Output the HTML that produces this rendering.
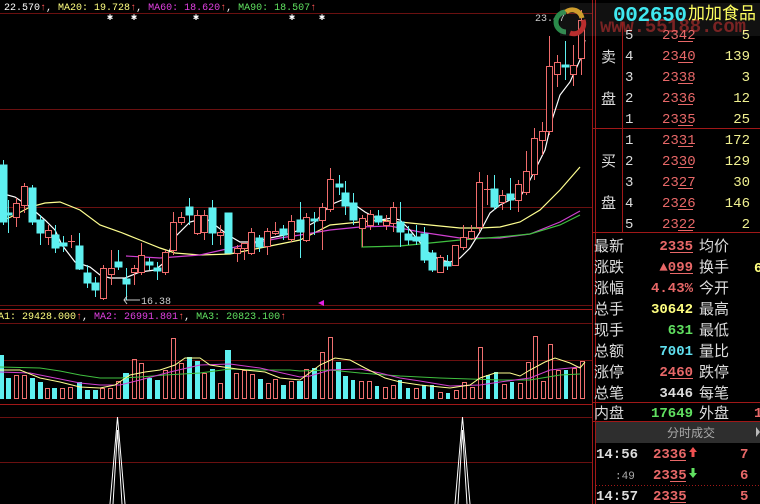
<!DOCTYPE html>
<html><head><meta charset="utf-8"><style>
html,body{margin:0;padding:0;background:#000;width:760px;height:504px;overflow:hidden}
svg{display:block}
.m{font-family:"Liberation Mono",monospace;font-size:10px}
.c{font-family:"Liberation Sans","Noto Sans CJK SC",sans-serif}
</style></head><body>
<svg width="760" height="504" viewBox="0 0 760 504" xmlns="http://www.w3.org/2000/svg">
<g stroke="#6a1010" stroke-width="1">
<line x1="0" y1="13.5" x2="592" y2="13.5"/>
<line x1="0" y1="109.5" x2="592" y2="109.5"/>
<line x1="0" y1="207.5" x2="592" y2="207.5"/>
<line x1="0" y1="305.5" x2="592" y2="305.5"/>
<line x1="0" y1="323.5" x2="592" y2="323.5"/>
<line x1="0" y1="360.5" x2="592" y2="360.5"/>
<line x1="0" y1="417.5" x2="592" y2="417.5"/>
<line x1="0" y1="462.5" x2="592" y2="462.5"/>
</g>
<g stroke="#a01818" stroke-width="1">
<line x1="0" y1="309.5" x2="592" y2="309.5"/>
<line x1="0" y1="404.5" x2="592" y2="404.5"/>
<line x1="592.5" y1="0" x2="592.5" y2="504"/>
<line x1="595.5" y1="0" x2="595.5" y2="504"/>
</g>
<text class="m" y="10" x="4"><tspan fill="#fff">22.570</tspan><tspan fill="#f55">↑</tspan><tspan fill="#fff">, </tspan><tspan fill="#ffff80">MA20: 19.728</tspan><tspan fill="#f55">↑</tspan><tspan fill="#fff">, </tspan><tspan fill="#e040e0">MA60: 18.620</tspan><tspan fill="#f55">↑</tspan><tspan fill="#fff">, </tspan><tspan fill="#60e060">MA90: 18.507</tspan><tspan fill="#f55">↑</tspan></text>
<g fill="#fff" class="m"><text x="107" y="20">✱</text><text x="131" y="20">✱</text><text x="193" y="20">✱</text><text x="289" y="20">✱</text><text x="319" y="20">✱</text></g>
<text class="m" x="535" y="21" fill="#ccc">23.47</text>
<g fill="none" stroke-width="1.2">
<polyline stroke="#ffff90" points="0,222 15,215 30,207 45,203 60,202 80,210 100,225 120,232 140,240 160,248 175,253 200,255 230,254 260,248 290,242 300,240 330,225 360,222 380,220 400,222 430,225 460,228 480,228 500,227 520,222 540,210 560,190 580,167"/>
<polyline stroke="#d040d0" points="126,256 160,258 200,255 240,246 280,238 300,235 330,230 360,227 390,226 420,232 460,238 500,238 530,234 560,222 580,211"/>
<polyline stroke="#40c040" points="362,220 362,247 400,246 430,243 460,240 500,237 530,234 560,225 580,215"/>
<polyline stroke="#fff" points="0,193 15,197 30,207 45,220 55,230 62,245 75,262 90,267 100,275 110,278 125,278 140,272 155,270 165,262 175,237 190,222 205,218 215,225 228,235 240,242 255,242 270,238 285,235 300,230 315,222 330,205 342,200 355,205 365,212 380,220 392,218 400,220 410,230 418,240 428,252 440,260 450,262 460,258 470,248 480,232 490,213 500,205 510,200 520,197 527,186 535,170 545,150 552,120 560,95 570,82 580,60 585,40"/>
</g>
<g stroke="#f06c6c" fill="#000" stroke-width="1">
<path d="M16.5 198V227M24.5 183V213M48.5 225V245M71.5 235V248M103.5 265V300M111.5 250V285M134.5 265V285M141.5 243V275M165.5 250V275M173.5 212V255M181.5 212V225M197.5 210V235M204.5 210V240M220.5 225V245M237.5 245V262M244.5 243V260M251.5 228V255M267.5 228V255M275.5 222V235M291.5 215V242M306.5 213V242M322.5 203V250M330.5 168V212M362.5 215V247M370.5 210V230M386.5 215V230M393.5 202V232M440.5 255V273M455.5 245V266M463.5 225V250M471.5 225V240M479.5 172V232M487.5 175V205M502.5 190V210M518.5 180V212M526.5 151V195M534.5 128V180M542.5 122V155M549.5 36V135M557.5 55V87M573.5 45V86M581.5 10V75"/>
<rect x="13.5" y="203.5" width="6" height="14"/><rect x="21.5" y="186.5" width="6" height="19"/><rect x="45.5" y="230.5" width="6" height="7"/><line x1="68" y1="241.5" x2="75" y2="241.5"/><rect x="100.5" y="268.5" width="6" height="30"/><rect x="108.5" y="268.5" width="6" height="6"/><rect x="131.5" y="268.5" width="6" height="4"/><rect x="138.5" y="255.5" width="6" height="17"/><rect x="162.5" y="252.5" width="6" height="20"/><rect x="170.5" y="222.5" width="6" height="28"/><rect x="178.5" y="217.5" width="6" height="5"/><rect x="194.5" y="215.5" width="6" height="18"/><rect x="201.5" y="215.5" width="6" height="17"/><rect x="217.5" y="232.5" width="6" height="3"/><rect x="234.5" y="248.5" width="6" height="5"/><rect x="241.5" y="243.5" width="6" height="5"/><rect x="248.5" y="232.5" width="6" height="21"/><rect x="264.5" y="231.5" width="6" height="15"/><rect x="272.5" y="231.5" width="6" height="2"/><rect x="288.5" y="221.5" width="6" height="18"/><rect x="303.5" y="217.5" width="6" height="23"/><rect x="319.5" y="207.5" width="6" height="13"/><rect x="327.5" y="179.5" width="6" height="30"/><rect x="359.5" y="218.5" width="6" height="10"/><rect x="367.5" y="214.5" width="6" height="11"/><rect x="383.5" y="221.5" width="6" height="4"/><rect x="390.5" y="207.5" width="6" height="16"/><rect x="437.5" y="257.5" width="6" height="15"/><rect x="452.5" y="245.5" width="6" height="20"/><rect x="460.5" y="237.5" width="6" height="10"/><rect x="468.5" y="231.5" width="6" height="7"/><rect x="476.5" y="182.5" width="6" height="45"/><line x1="484" y1="189.5" x2="491" y2="189.5"/><rect x="499.5" y="195.5" width="6" height="7"/><rect x="515.5" y="184.5" width="6" height="16"/><rect x="523.5" y="171.5" width="6" height="21"/><rect x="531.5" y="138.5" width="6" height="36"/><rect x="539.5" y="131.5" width="6" height="9"/><rect x="546.5" y="66.5" width="6" height="65"/><rect x="554.5" y="62.5" width="6" height="12"/><rect x="570.5" y="65.5" width="6" height="9"/><rect x="578.5" y="20.5" width="6" height="38"/>
</g>
<g stroke="#5ef0f0" fill="#5ef0f0" stroke-width="1">
<path d="M3.5 160V225M8.5 200V233M32.5 185V225M40.5 215V245M55.5 225V253M63.5 236V252M79.5 233V270M87.5 265V288M95.5 277V297M118.5 250V270M126.5 268V300M149.5 258V270M157.5 262V280M189.5 198V225M212.5 200V245M228.5 213V253M259.5 235V252M283.5 225V240M300.5 202V258M314.5 212V235M339.5 175V195M345.5 181V215M353.5 193V225M378.5 210V225M400.5 202V247M408.5 226V245M416.5 225V245M424.5 227V263M432.5 250V272M447.5 255V270M494.5 175V210M510.5 178V210M565.5 41V80"/>
<rect x="0" y="165" width="7" height="57"/><rect x="5" y="213" width="7" height="2"/><rect x="29" y="188" width="7" height="34"/><rect x="37" y="220" width="7" height="13"/><rect x="52" y="235" width="7" height="13"/><rect x="60" y="243" width="7" height="3"/><rect x="76" y="246" width="7" height="23"/><rect x="84" y="273" width="7" height="10"/><rect x="92" y="283" width="7" height="7"/><rect x="115" y="262" width="7" height="5"/><rect x="123" y="279" width="7" height="5"/><rect x="146" y="262" width="7" height="3"/><rect x="154" y="268" width="7" height="3"/><rect x="186" y="207" width="7" height="8"/><rect x="209" y="208" width="7" height="25"/><rect x="225" y="213" width="7" height="40"/><rect x="256" y="238" width="7" height="9"/><rect x="280" y="229" width="7" height="6"/><rect x="297" y="220" width="7" height="12"/><rect x="311" y="219" width="7" height="2"/><rect x="336" y="184" width="7" height="3"/><rect x="342" y="193" width="7" height="13"/><rect x="350" y="203" width="7" height="17"/><rect x="375" y="216" width="7" height="6"/><rect x="397" y="222" width="7" height="10"/><rect x="405" y="234" width="7" height="6"/><rect x="413" y="237" width="7" height="4"/><rect x="421" y="234" width="7" height="26"/><rect x="429" y="253" width="7" height="17"/><rect x="444" y="262" width="7" height="4"/><rect x="491" y="189" width="7" height="18"/><rect x="507" y="194" width="7" height="6"/><rect x="562" y="65" width="7" height="2"/>
</g>
<path d="M127 296 L124 300 L127 304 M124 300 H140" stroke="#ccc" fill="none"/>
<text class="m" x="141" y="304" fill="#ccc">16.38</text>
<path d="M318 303 L324 300 L324 306Z" fill="#e020e0"/>
<text class="m" y="319" x="-2"><tspan fill="#ffff80">A1: 29428.000</tspan><tspan fill="#f55">↑</tspan><tspan fill="#fff">, </tspan><tspan fill="#e040e0">MA2: 26991.801</tspan><tspan fill="#f55">↑</tspan><tspan fill="#fff">, </tspan><tspan fill="#60e060">MA3: 20823.100</tspan><tspan fill="#f55">↑</tspan></text>
<g fill="#5ef0f0">
<rect x="0" y="355" width="4" height="44"/><rect x="6" y="378" width="5" height="21"/><rect x="30" y="378" width="5" height="21"/><rect x="38" y="382" width="5" height="17"/><rect x="52" y="388" width="5" height="11"/><rect x="77" y="382" width="5" height="17"/><rect x="85" y="390" width="5" height="9"/><rect x="93" y="390" width="5" height="9"/><rect x="123" y="373" width="6" height="26"/><rect x="147" y="378" width="5" height="21"/><rect x="155" y="380" width="5" height="19"/><rect x="187" y="357" width="5" height="42"/><rect x="195" y="361" width="5" height="38"/><rect x="210" y="369" width="5" height="30"/><rect x="225" y="350" width="6" height="49"/><rect x="258" y="379" width="5" height="20"/><rect x="281" y="385" width="5" height="14"/><rect x="297" y="381" width="6" height="18"/><rect x="312" y="368" width="5" height="31"/><rect x="336" y="362" width="5" height="37"/><rect x="343" y="376" width="5" height="23"/><rect x="351" y="380" width="4" height="19"/><rect x="375" y="386" width="4" height="13"/><rect x="398" y="380" width="4" height="19"/><rect x="406" y="388" width="4" height="11"/><rect x="422" y="385" width="4" height="14"/><rect x="430" y="385" width="4" height="14"/><rect x="446" y="393" width="4" height="6"/><rect x="486" y="375" width="4" height="24"/><rect x="494" y="372" width="4" height="27"/><rect x="510" y="382" width="4" height="17"/><rect x="564" y="370" width="4" height="29"/>
</g>
<g fill="none" stroke="#f07070">
<rect x="14.5" y="375.5" width="4" height="23"/><rect x="22.5" y="375.5" width="4" height="23"/><rect x="45.5" y="388.5" width="4" height="10"/><rect x="60.5" y="388.5" width="4" height="10"/><rect x="68.5" y="387.5" width="4" height="11"/><rect x="100.5" y="388.5" width="4" height="10"/><rect x="108.5" y="388.5" width="4" height="10"/><rect x="116.5" y="381.5" width="4" height="17"/><rect x="132.5" y="359.5" width="4" height="39"/><rect x="139.5" y="363.5" width="4" height="35"/><rect x="163.5" y="370.5" width="4" height="28"/><rect x="171.5" y="338.5" width="4" height="60"/><rect x="179.5" y="363.5" width="4" height="35"/><rect x="202.5" y="373.5" width="4" height="25"/><rect x="218.5" y="383.5" width="4" height="15"/><rect x="234.5" y="373.5" width="4" height="25"/><rect x="242.5" y="370.5" width="4" height="28"/><rect x="250.5" y="374.5" width="4" height="24"/><rect x="266.5" y="383.5" width="4" height="15"/><rect x="273.5" y="379.5" width="4" height="19"/><rect x="289.5" y="381.5" width="4" height="17"/><rect x="304.5" y="369.5" width="4" height="29"/><rect x="320.5" y="352.5" width="4" height="46"/><rect x="328.5" y="337.5" width="4" height="61"/><rect x="359.5" y="381.5" width="4" height="17"/><rect x="367.5" y="381.5" width="4" height="17"/><rect x="383.5" y="387.5" width="4" height="11"/><rect x="391.5" y="385.5" width="4" height="13"/><rect x="414.5" y="388.5" width="4" height="10"/><rect x="438.5" y="392.5" width="4" height="6"/><rect x="454.5" y="390.5" width="4" height="8"/><rect x="462.5" y="382.5" width="4" height="16"/><rect x="470.5" y="387.5" width="4" height="11"/><rect x="478.5" y="347.5" width="4" height="51"/><rect x="502.5" y="384.5" width="4" height="14"/><rect x="518.5" y="383.5" width="4" height="15"/><rect x="526.5" y="362.5" width="4" height="36"/><rect x="533.5" y="336.5" width="4" height="62"/><rect x="541.5" y="381.5" width="4" height="17"/><rect x="548.5" y="344.5" width="4" height="54"/><rect x="556.5" y="370.5" width="4" height="28"/><rect x="572.5" y="368.5" width="4" height="30"/><rect x="580.5" y="361.5" width="4" height="37"/>
</g>
<g fill="none" stroke-width="1">
<polyline stroke="#40c040" points="0,367 40,368 60,371 80,375 100,378 120,378 140,377 165,375 200,373 230,369 260,370 290,370 300,371 330,370 360,373 400,376 440,378 470,379 500,380 530,380 560,375 580,374"/>
<polyline stroke="#d040d0" points="0,372 30,373 50,377 80,383 100,385 120,385 140,380 170,372 200,365 230,364 260,368 300,377 310,376 330,370 360,369 380,373 400,378 420,381 450,386 480,385 500,382 530,378 550,370 580,367"/>
<polyline stroke="#ffff90" points="0,370 20,370 40,378 60,382 80,387 100,388 115,385 130,375 145,372 160,370 175,365 185,358 200,358 210,365 230,368 245,370 265,372 280,378 300,380 320,365 335,358 350,360 365,368 385,378 400,382 420,385 450,388 470,385 480,378 495,373 510,373 520,376 530,370 545,362 555,358 570,363 580,368 585,362"/>
</g>
<g stroke="#fff" fill="none" stroke-width="1">
<path d="M110 504 L117.5 417 L125 504 M113 504 L117.5 430 L122 504"/>
<path d="M455 504 L462.5 417 L470 504 M458 504 L462.5 430 L467 504"/>
</g>
<g fill="none" stroke-width="5">
<path d="M566 12 A10 10 0 0 0 566 32" stroke="#2a8a4a"/>
<path d="M566 12 A10 10 0 0 1 582 18" stroke="#d8a020"/>
<path d="M583 20 A10 10 0 0 1 570 33" stroke="#c02020"/>
</g>
<rect x="560" y="3" width="200" height="33" fill="#888" opacity="0.12"/>
<text x="600" y="32" class="m" style="font-size:19px;font-weight:bold" fill="#c03030" opacity="0.6" textLength="146">www.55188.com</text>
<text x="613" y="21" class="m" style="font-size:21px;font-weight:bold" fill="#40e8f0" textLength="74">002650</text>
<text x="688" y="19" class="c" style="font-size:17px" fill="#ffff60">加加食品</text>
<g stroke="#a01818"><line x1="593" y1="128.5" x2="760" y2="128.5"/><line x1="593" y1="232.5" x2="760" y2="232.5"/><line x1="622.5" y1="22" x2="622.5" y2="232"/><line x1="593" y1="402.5" x2="760" y2="402.5"/><line x1="593" y1="421.5" x2="760" y2="421.5"/></g>
<g class="c" style="font-size:15px" fill="#ddd"><text x="601" y="62">卖</text><text x="601" y="104">盘</text><text x="601" y="166">买</text><text x="601" y="208">盘</text></g>
<g class="m" style="font-size:14px" fill="#ddd"><text x="625" y="39">5</text><text x="625" y="60">4</text><text x="625" y="81">3</text><text x="625" y="102">2</text><text x="625" y="123">1</text><text x="625" y="144">1</text><text x="625" y="165">2</text><text x="625" y="186">3</text><text x="625" y="207">4</text><text x="625" y="228">5</text></g>
<g class="m" style="font-size:14px" fill="#e86868"><text x="662" y="39">2342</text><text x="662" y="60">2340</text><text x="662" y="81">2338</text><text x="662" y="102">2336</text><text x="662" y="123">2335</text><text x="662" y="144">2331</text><text x="662" y="165">2330</text><text x="662" y="186">2327</text><text x="662" y="207">2326</text><text x="662" y="228">2322</text></g>
<g stroke="#e86868"><line x1="678" y1="41.5" x2="693" y2="41.5"/><line x1="678" y1="62.5" x2="693" y2="62.5"/><line x1="678" y1="83.5" x2="693" y2="83.5"/><line x1="678" y1="104.5" x2="693" y2="104.5"/><line x1="678" y1="125.5" x2="693" y2="125.5"/><line x1="678" y1="146.5" x2="693" y2="146.5"/><line x1="678" y1="167.5" x2="693" y2="167.5"/><line x1="678" y1="188.5" x2="693" y2="188.5"/><line x1="678" y1="209.5" x2="693" y2="209.5"/><line x1="678" y1="230.5" x2="693" y2="230.5"/></g>
<g class="m" style="font-size:14px" fill="#f0f090" text-anchor="end"><text x="750" y="39">5</text><text x="750" y="60">139</text><text x="750" y="81">3</text><text x="750" y="102">12</text><text x="750" y="123">25</text><text x="750" y="144">172</text><text x="750" y="165">129</text><text x="750" y="186">30</text><text x="750" y="207">146</text><text x="750" y="228">2</text></g>
<g class="c" style="font-size:15px" fill="#ddd"><text x="594" y="251">最新</text><text x="594" y="272">涨跌</text><text x="594" y="293">涨幅</text><text x="594" y="314">总手</text><text x="594" y="335">现手</text><text x="594" y="356">总额</text><text x="594" y="377">涨停</text><text x="594" y="398">总笔</text><text x="594" y="418">内盘</text>
<text x="699" y="251">均价</text><text x="699" y="272">换手</text><text x="699" y="293">今开</text><text x="699" y="314">最高</text><text x="699" y="335">最低</text><text x="699" y="356">量比</text><text x="699" y="377">跌停</text><text x="699" y="398">每笔</text><text x="699" y="418">外盘</text></g>
<g class="m" style="font-size:14px;font-weight:bold" text-anchor="end"><text x="693" y="250" fill="#e86868">2335</text><text x="693" y="271" fill="#e86868">▲099</text><text x="693" y="292" fill="#e86868">4.43%</text><text x="693" y="313" fill="#ffff80">30642</text><text x="693" y="334" fill="#60e060">631</text><text x="693" y="355" fill="#60e0f0">7001</text><text x="693" y="376" fill="#e86868">2460</text><text x="693" y="397" fill="#ddd">3446</text><text x="693" y="417" fill="#60e060">17649</text></g>
<g stroke="#e86868"><line x1="670" y1="252.5" x2="693" y2="252.5"/><line x1="670" y1="273.5" x2="693" y2="273.5"/><line x1="670" y1="378.5" x2="693" y2="378.5"/></g>
<text x="754" y="272" class="m" style="font-size:14px;font-weight:bold" fill="#ffff80">6</text>
<text x="754" y="417" class="m" style="font-size:14px;font-weight:bold" fill="#e86868">1</text>
<rect x="596" y="422" width="164" height="21" fill="#2e2e2e"/>
<text x="667" y="437" class="c" style="font-size:12px" fill="#aaa">分时成交</text>
<path d="M756 427 L760 432 L756 437Z" fill="#bbb"/>
<g class="m" style="font-size:14px;font-weight:bold"><text x="596" y="458" fill="#ddd">14:56</text><text x="615" y="479" fill="#aaa" style="font-size:11px;font-weight:normal">:49</text><text x="596" y="500" fill="#ddd">14:57</text>
<text x="653" y="458" fill="#e86868">2336</text><text x="653" y="479" fill="#e86868">2335</text><text x="653" y="500" fill="#e86868">2335</text>
<text x="740" y="458" fill="#e86868">7</text><text x="740" y="479" fill="#e86868">6</text><text x="740" y="500" fill="#e86868">5</text></g>
<g stroke="#e86868"><line x1="670" y1="460.5" x2="686" y2="460.5"/><line x1="670" y1="481.5" x2="686" y2="481.5"/><line x1="670" y1="502.5" x2="686" y2="502.5"/></g>
<path d="M693 447 L689 452 H691.5 V457 H694.5 V452 H697Z" fill="#f05050"/>
<path d="M693 478 L689 473 H691.5 V468 H694.5 V473 H697Z" fill="#60e060"/>
<line x1="596" y1="485.5" x2="760" y2="485.5" stroke="#a01818" stroke-dasharray="1,2"/>
</svg>
</body></html>
